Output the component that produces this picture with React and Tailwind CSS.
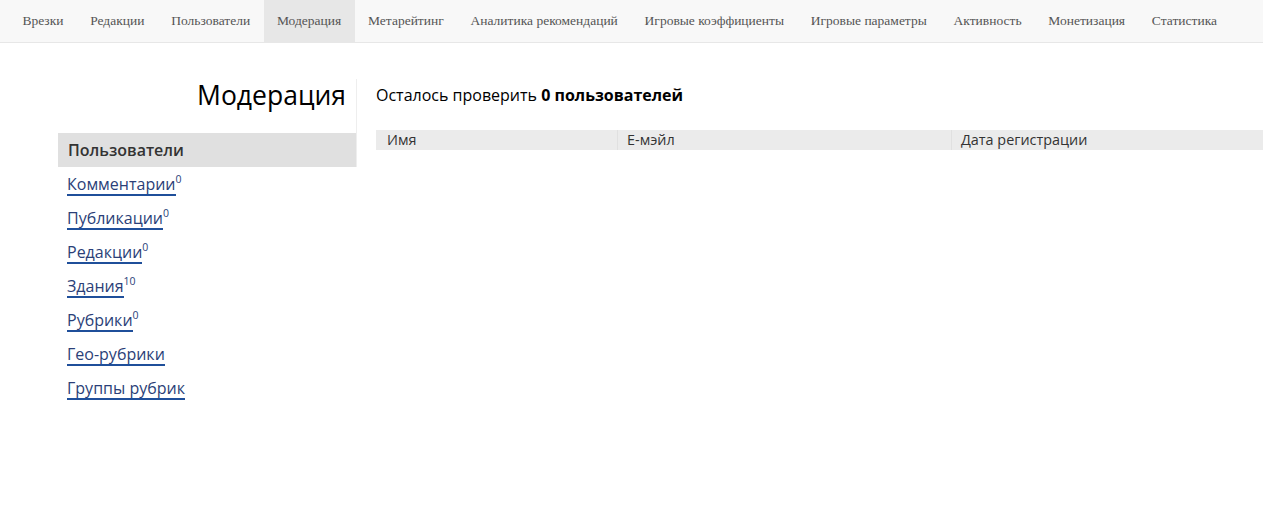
import React from 'react';

const navItems = [
  'Врезки',
  'Редакции',
  'Пользователи',
  'Модерация',
  'Метарейтинг',
  'Аналитика рекомендаций',
  'Игровые коэффициенты',
  'Игровые параметры',
  'Активность',
  'Монетизация',
  'Статистика',
];

const sideLinks = [
  { label: 'Комментарии', count: '0' },
  { label: 'Публикации', count: '0' },
  { label: 'Редакции', count: '0' },
  { label: 'Здания', count: '10' },
  { label: 'Рубрики', count: '0' },
  { label: 'Гео-рубрики' },
  { label: 'Группы рубрик' },
];

export default function App() {
  return (
    <div className="min-h-[519px] bg-white font-['Open_Sans',sans-serif] text-[#333]">
      {/* top nav */}
      <nav className="flex h-[43px] border-b border-[#e7e7e7] bg-[#f8f8f8] pl-[9px] font-['Liberation_Serif',serif] text-[13.5px] text-[#555]">
        {navItems.map((item) => (
          <a
            key={item}
            className={
              'flex h-[42px] items-center whitespace-nowrap px-[13.4px] ' +
              (item === 'Модерация' ? 'bg-[#e7e7e7]' : '')
            }
          >
            {item}
          </a>
        ))}
      </nav>

      <div className="flex pt-[36px]">
        {/* sidebar */}
        <aside className="ml-[58px] w-[299px] shrink-0">
          <div className="border-r border-[#eee]">
            <h1 className="h-[54px] pr-[10px] pt-[1px] text-right text-[26.5px] leading-[30px] text-black">Модерация</h1>
            <div className="flex h-[34px] items-center pl-[10px] text-[16px] font-semibold text-[#333] bg-[#e0e0e0]">
              Пользователи
            </div>
          </div>
          <ul className="pl-[9px] pt-[1px]">
            {sideLinks.map((l) => (
              <li key={l.label} className="flex h-[34px] items-center">
                <a className="border-b-2 border-[#1f4f9a] text-[16px] leading-[20px] text-[#2b3f78]">
                  {l.label}
                </a>
                {l.count && (
                  <span className="self-start mt-[6px] text-[10.5px] leading-[10px] text-[#2b3f78]">{l.count}</span>
                )}
              </li>
            ))}
          </ul>
        </aside>

        {/* main */}
        <main className="ml-[19px] flex-1">
          <p className="mt-[4px] text-[16px] leading-[24px] text-black">
            Осталось проверить <span className="font-bold">0 пользователей</span>
          </p>
          <div className="mt-[23px] grid h-[20px] grid-cols-[242px_334px_1fr] bg-[#ebebeb] text-[14.4px] leading-[20px] text-[#333]">
            <div className="border-r border-[#e0e0e0] pl-[11px]">Имя</div>
            <div className="border-r border-[#e0e0e0] pl-[9px]">E-мэйл</div>
            <div className="pl-[9px]">Дата регистрации</div>
          </div>
        </main>
      </div>
    </div>
  );
}
